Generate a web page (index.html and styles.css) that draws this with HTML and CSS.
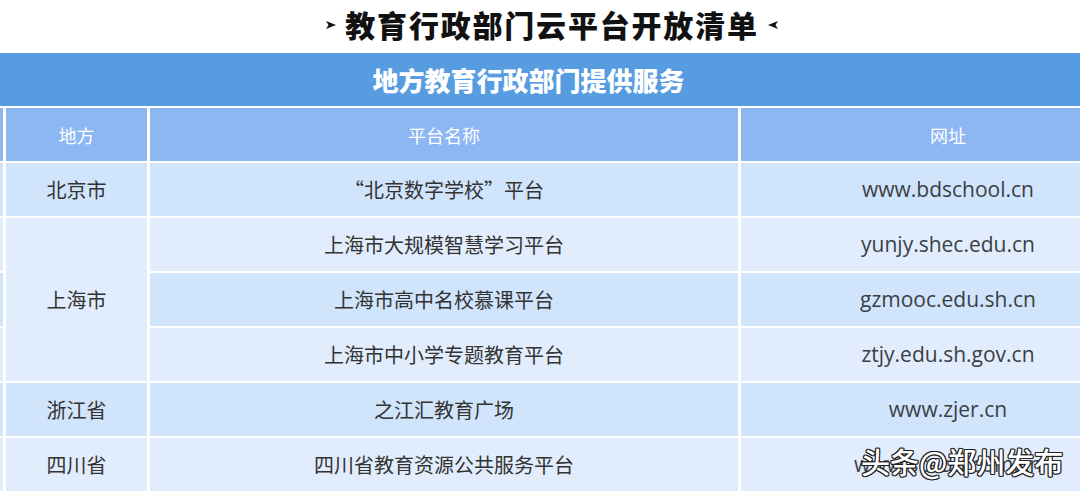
FILE: index.html
```html
<!DOCTYPE html>
<html lang="zh-CN">
<head>
<meta charset="utf-8">
<title>教育行政部门云平台开放清单</title>
<link rel="stylesheet" href="styles.css">
</head>
<body>
<div class="page">
  <header class="title">
    <svg class="mark" width="10" height="8" viewBox="0 0 10 8"><polygon points="0,0 10,4 0,8 2.5,4" fill="#111"/></svg>
    <h1>教育行政部门云平台开放清单</h1>
    <svg class="mark" width="10" height="8" viewBox="0 0 10 8"><polygon points="10,0 0,4 10,8 7.5,4" fill="#111"/></svg>
  </header>
  <div class="band">地方教育行政部门提供服务</div>
  <div class="table">
    <div class="strip head"></div>
    <div class="cell head">地方</div>
    <div class="cell head">平台名称</div>
    <div class="cell head">网址</div>

    <div class="strip c2"></div>
    <div class="cell c2">北京市</div>
    <div class="cell c2">“北京数字学校”平台</div>
    <div class="cell c2 url">www.bdschool.cn</div>

    <div class="strip c1"></div>
    <div class="cell c1 sh">上海市</div>
    <div class="cell c1">上海市大规模智慧学习平台</div>
    <div class="cell c1 url">yunjy.shec.edu.cn</div>

    <div class="strip c2"></div>
    <div class="cell c2">上海市高中名校慕课平台</div>
    <div class="cell c2 url">gzmooc.edu.sh.cn</div>

    <div class="strip c1"></div>
    <div class="cell c1">上海市中小学专题教育平台</div>
    <div class="cell c1 url">ztjy.edu.sh.gov.cn</div>

    <div class="strip c2"></div>
    <div class="cell c2">浙江省</div>
    <div class="cell c2">之江汇教育广场</div>
    <div class="cell c2 url">www.zjer.cn</div>

    <div class="strip c1"></div>
    <div class="cell c1">四川省</div>
    <div class="cell c1">四川省教育资源公共服务平台</div>
    <div class="cell c1 url">www.scedu.com.cn</div>
  </div>
  <div class="watermark">头条@郑州发布</div>
</div>
</body>
</html>
```

FILE: styles.css
```css
* { box-sizing: border-box; margin: 0; padding: 0; }

html, body {
  width: 1080px;
  height: 491px;
  overflow: hidden;
  background: #ffffff;
}

body {
  font-family: "Noto Sans CJK SC", "Noto Sans", sans-serif;
  color: #333;
}

.page {
  position: relative;
  width: 1080px;
  height: 491px;
  overflow: hidden;
}

.title {
  height: 53px;
  display: flex;
  align-items: center;
  justify-content: center;
  gap: 9px;
  padding-left: 24px;
}

.title h1 {
  font-size: 30px;
  font-weight: 800;
  letter-spacing: 1.8px;
  color: #111;
  line-height: 1;
  margin-top: -6px;
}

.mark { display: block; margin-top: -4px; }

.band {
  height: 53px;
  background: #579be1;
  color: #fff;
  font-size: 26px;
  font-weight: 900;
  display: flex;
  align-items: center;
  justify-content: center;
  padding-right: 23px;
  line-height: 1;
}

.table {
  display: grid;
  grid-template-columns: 3px 141px 588px 414px;
  grid-auto-rows: 53px;
  column-gap: 3px;
  row-gap: 2px;
  padding-top: 2px;
  width: 1160px;
  background: #fff;
}

.cell {
  display: flex;
  align-items: center;
  justify-content: center;
  font-size: 20px;
  line-height: 1;
  color: #333;
}

.head {
  background: #8cb7f2;
  color: #fff;
  font-size: 18px;
}

.c1 { background: #e1edfc; }
.c2 { background: #d0e4fb; }

.sh {
  grid-row: span 3;
  background: #e1edfc;
}

.url {
  font-family: "Open Sans", "Noto Sans", sans-serif;
  color: #3b3f45;
  font-size: 21px;
}

.watermark {
  position: absolute;
  left: 861px;
  top: 447px;
  font-size: 29px;
  line-height: 1;
  color: #fff;
  font-family: "Noto Sans CJK SC", sans-serif;
  font-weight: 500;
  text-shadow:
    1px 1px 0 #222, -1px -1px 0 #222, 1px -1px 0 #222, -1px 1px 0 #222,
    0 1px 0 #222, 0 -1px 0 #222, 1px 0 0 #222, -1px 0 0 #222;
}
```
